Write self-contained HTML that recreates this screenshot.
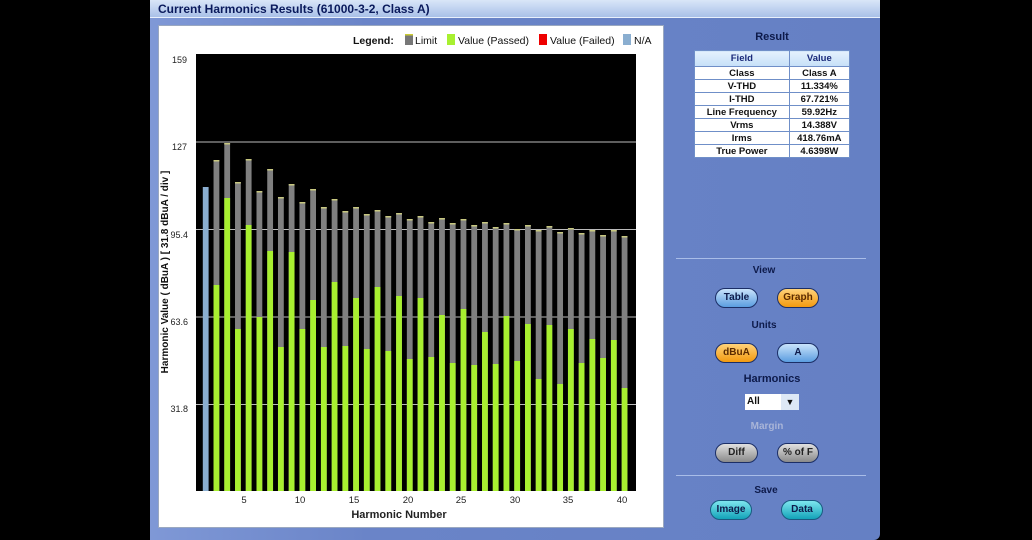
<!DOCTYPE html>
<html><head><meta charset="utf-8"><style>
*{margin:0;padding:0;box-sizing:border-box}
body{width:1032px;height:540px;background:#000;position:relative;overflow:hidden;font-family:"Liberation Sans",Arial,sans-serif}
.win{position:absolute;left:150px;top:0;width:730px;height:540px;background:linear-gradient(90deg,#7f98d6,#6a84c8 30%,#6580c4);border-radius:0 6px 6px 0}
.title{position:absolute;left:0;top:0;width:730px;height:18px;background:linear-gradient(#d9e6f8,#a9c0e8);border-bottom:1px solid #e8f0fc;color:#0a1a5c;font-weight:bold;font-size:12px;line-height:18px;padding-left:8px}
.chart{position:absolute;left:8px;top:25px;width:506px;height:503px;background:#fff;border:1px solid #9aa8c0}
.rp{position:absolute;color:#0d1a4a;font-weight:bold;font-size:10px;text-align:center}
.btn{position:absolute;height:20px;border-radius:10px;font-size:10px;font-weight:bold;text-align:center;line-height:18px;border:1px solid #1b2e66}
.blue{background:linear-gradient(#c9e3fb,#5b9de0);color:#0d1a4a}
.orange{background:linear-gradient(#ffd27a,#f39a10);color:#5a2a00}
.grey{background:linear-gradient(#e0e0e0,#8a8a8a);color:#222}
.teal{background:linear-gradient(#7ee6ee,#13a3b8);color:#0d1a4a;border-color:#1a5a80}
table{position:absolute;left:694px;top:50px;width:156px;border-collapse:collapse;font-size:9.5px;font-weight:bold;color:#111}
td{border:1px solid #6f8fc8;background:#fff;text-align:center;height:13px;padding:0}
th{border:1px solid #6f8fc8;background:linear-gradient(#e4f1fd,#c6e0f8);color:#1a2a7a;height:16px;font-size:9.5px}
.sep{position:absolute;left:676px;width:190px;height:1px;background:#a9bde8}
</style></head><body>
<div class="win">
<div class="title">Current Harmonics Results (61000-3-2, Class A)</div>
<div class="chart"></div>
</div>
<svg style="position:absolute;left:0;top:0" width="1032" height="540">
<g font-family="Liberation Sans, Arial, sans-serif" font-size="10" fill="#111">
<text x="353" y="44" font-weight="bold" font-size="10.5">Legend:</text>
<rect x="405" y="34" width="8" height="11" fill="#777"/><rect x="405" y="34" width="8" height="1.5" fill="#cc3"/>
<text x="415" y="44" font-size="10.5">Limit</text>
<rect x="447" y="34" width="8" height="11" fill="#a8f030"/>
<text x="458" y="44" font-size="10.5">Value (Passed)</text>
<rect x="539" y="34" width="8" height="11" fill="#e00"/>
<text x="550" y="44" font-size="10.5">Value (Failed)</text>
<rect x="623" y="34" width="8" height="11" fill="#8aaed0"/>
<text x="634" y="44" font-size="10.5">N/A</text>
</g>
<rect x="196" y="54" width="440" height="437" fill="#000"/>
<g stroke="#bbb" stroke-width="1">
<line x1="196" y1="142" x2="636" y2="142"/><line x1="196" y1="229.5" x2="636" y2="229.5"/><line x1="196" y1="317" x2="636" y2="317"/><line x1="196" y1="404.5" x2="636" y2="404.5"/>
</g>
<g id="bars"></g>
<g font-family="Liberation Sans, Arial, sans-serif" font-size="9" fill="#222" text-anchor="end">
<text x="187" y="63">159</text><text x="187" y="150">127</text><text x="188" y="238">95.4</text><text x="188" y="325">63.6</text><text x="188" y="412">31.8</text>
</g>
<g font-family="Liberation Sans, Arial, sans-serif" font-size="9.5" fill="#222" text-anchor="middle">
<text x="244" y="503">5</text><text x="300" y="503">10</text><text x="354" y="503">15</text><text x="408" y="503">20</text><text x="461" y="503">25</text><text x="515" y="503">30</text><text x="568" y="503">35</text><text x="622" y="503">40</text>
<text x="399" y="518" font-weight="bold" font-size="11">Harmonic Number</text>
<text transform="translate(168,272) rotate(-90)" font-weight="bold" font-size="10" fill="#111">Harmonic Value ( dBuA ) [ 31.8 dBuA / div ]</text>
</g>
</svg>
<div class="rp" style="left:694px;top:31px;width:156px;font-size:11px">Result</div>
<table>
<tr><th>Field</th><th>Value</th></tr>
<tr><td>Class</td><td>Class A</td></tr>
<tr><td>V-THD</td><td>11.334%</td></tr>
<tr><td>I-THD</td><td>67.721%</td></tr>
<tr><td>Line Frequency</td><td>59.92Hz</td></tr>
<tr><td>Vrms</td><td>14.388V</td></tr>
<tr><td>Irms</td><td>418.76mA</td></tr>
<tr><td>True Power</td><td>4.6398W</td></tr>
</table>
<div class="sep" style="top:258px"></div>
<div class="rp" style="left:714px;top:265px;width:100px">View</div>
<div class="btn blue" style="left:715px;top:288px;width:43px">Table</div>
<div class="btn orange" style="left:777px;top:288px;width:42px">Graph</div>
<div class="rp" style="left:714px;top:320px;width:100px">Units</div>
<div class="btn orange" style="left:715px;top:343px;width:43px">dBuA</div>
<div class="btn blue" style="left:777px;top:343px;width:42px">A</div>
<div class="rp" style="left:722px;top:373px;width:100px;font-size:11px">Harmonics</div>
<div style="position:absolute;left:745px;top:394px;width:54px;height:16px;background:#fff;font-size:10px;font-weight:bold;line-height:16px;padding-left:2px;color:#111">All<span style="position:absolute;right:0;top:0;width:18px;height:16px;background:#dde8f6;text-align:center;font-size:9px">▼</span></div>
<div class="rp" style="left:717px;top:421px;width:100px;color:#a9b5d8">Margin</div>
<div class="btn grey" style="left:715px;top:443px;width:43px">Diff</div>
<div class="btn grey" style="left:777px;top:443px;width:42px">% of F</div>
<div class="sep" style="top:475px"></div>
<div class="rp" style="left:716px;top:485px;width:100px">Save</div>
<div class="btn teal" style="left:710px;top:500px;width:42px">Image</div>
<div class="btn teal" style="left:781px;top:500px;width:42px">Data</div>
<script>
var g=[null,160,143,182,159,191,169,197,184,202,189,207,199,211,207,214,210,216,213,219,216,222,218,223,219,225,222,227,223,229,225,230,226,232,228,233,230,235,230,236];
var v=[187,285,198,329,225,317,251,347,252,329,300,347,282,346,298,349,287,351,296,359,298,357,315,363,309,365,332,364,316,361,324,379,325,384,329,363,339,358,340,388];
var s='';
for(var i=0;i<40;i++){var x=202.8+i*10.74;
if(i==0){s+='<rect x="'+x+'" y="187" width="5.8" height="'+(491-187)+'" fill="#8aaed0"/>';continue;}
s+='<rect x="'+x+'" y="'+g[i]+'" width="5.8" height="'+(491-g[i])+'" fill="#808080"/>';
s+='<rect x="'+x+'" y="'+g[i]+'" width="5.8" height="1.5" fill="#c8c880"/>';
s+='<rect x="'+x+'" y="'+v[i]+'" width="5.8" height="'+(491-v[i])+'" fill="#a8f030"/>';}
document.getElementById('bars').innerHTML=s;
</script>
</body></html>
